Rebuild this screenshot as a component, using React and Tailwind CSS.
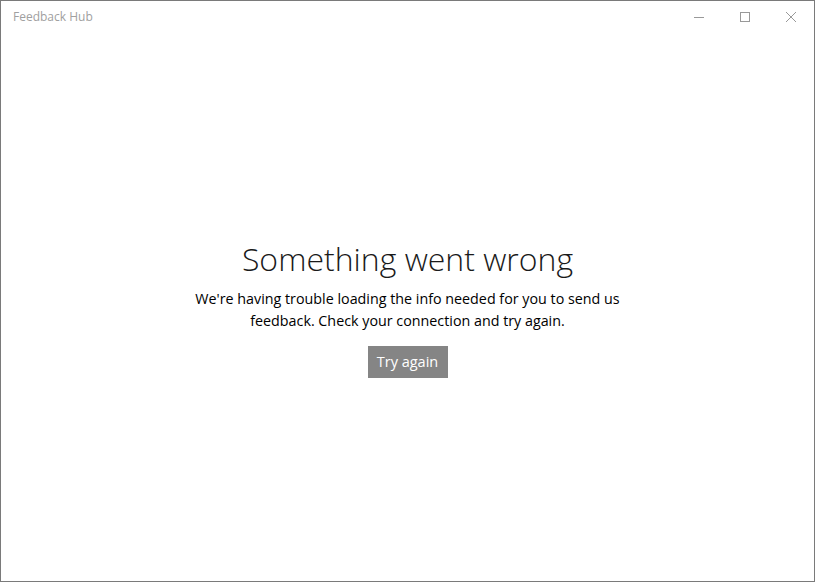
import React from 'react';

const App = () => {
  return (
    <div
      className="w-[815px] h-[582px] bg-white border border-[#7a7a7a] flex flex-col"
      style={{ fontFamily: '"Open Sans", "Noto Sans", sans-serif' }}
    >
      {/* Title bar */}
      <div className="h-[31px] flex items-center justify-between shrink-0">
        <span className="pl-3 text-[12px] text-[#a0a0a0]">Feedback Hub</span>
        <div className="flex h-full">
          <button className="w-[46px] h-full flex items-center justify-center">
            <svg width="10" height="10" viewBox="0 0 10 10">
              <path d="M0 5.5h10" stroke="#999" strokeWidth="1" />
            </svg>
          </button>
          <button className="w-[46px] h-full flex items-center justify-center">
            <svg width="10" height="10" viewBox="0 0 10 10">
              <rect x="0.5" y="0.5" width="9" height="9" fill="none" stroke="#999" strokeWidth="1" />
            </svg>
          </button>
          <button className="w-[46px] h-full flex items-center justify-center">
            <svg width="10" height="10" viewBox="0 0 10 10">
              <path d="M0 0L10 10M10 0L0 10" stroke="#999" strokeWidth="1" />
            </svg>
          </button>
        </div>
      </div>

      {/* Error content */}
      <div className="flex-1 flex flex-col items-center justify-center pt-[4px] text-black">
        <h1 className="text-[32px] font-light leading-[40px] text-[#1a1a1a]">Something went wrong</h1>
        <p className="mt-[9px] text-[14.3px] leading-[22px] text-center w-[436px]">
          We're having trouble loading the info needed for you to send us feedback. Check your connection and try again.
        </p>
        <button className="mt-[14px] w-[80px] h-[32px] bg-[#858585] text-white text-[14.5px]">Try again</button>
      </div>
    </div>
  );
};

export default App;
